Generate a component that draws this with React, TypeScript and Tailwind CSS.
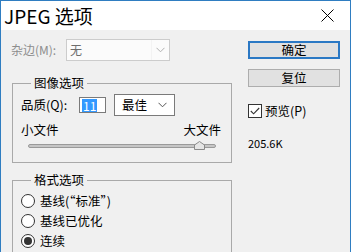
import React from "react";

const font = { fontFamily: '"Noto Sans CJK SC", "Noto Sans", sans-serif' };

function Chevron({ color }: { color: string }) {
  return (
    <svg width="9" height="6" viewBox="0 0 9 6" fill="none">
      <path d="M0.5 0.8 L4.5 4.8 L8.5 0.8" stroke={color} strokeWidth="1" />
    </svg>
  );
}

function Radio({ label, checked }: { label: string; checked?: boolean }) {
  return (
    <div className="flex h-[20px] items-center">
      <div className="ml-[8px] flex h-[14px] w-[14px] items-center justify-center rounded-full border border-[#333] bg-white">
        {checked && <div className="h-[8px] w-[8px] rounded-full bg-[#333]" />}
      </div>
      <span className="ml-[5px] text-[12.5px] leading-[16px] text-black">{label}</span>
    </div>
  );
}

export default function App() {
  return (
    <div
      className="flex h-[252px] w-[351px] flex-col overflow-hidden border-x border-t border-[#2f7dc1] bg-[#f0f0f0]"
      style={font}
    >
      {/* 标题栏 */}
      <div className="flex h-[29px] shrink-0 items-center justify-between bg-white pl-[3px] pr-[16px]">
        <span className="text-[19px] leading-[24px] text-black">JPEG 选项</span>
        <svg width="13" height="13" viewBox="0 0 13 13">
          <path d="M0.5 0.5 L12.5 12.5 M12.5 0.5 L0.5 12.5" stroke="#000" strokeWidth="1" />
        </svg>
      </div>

      <div className="flex">
        {/* 左侧 */}
        <div className="w-[231px] shrink-0 pl-[10px]">
          <div className="mt-[9px] flex h-[22px] items-center">
            <span className="w-[55px] text-[12px] leading-[16px] text-[#8d8d8d]">杂边(M):</span>
            <div className="flex h-[22px] w-[104px] items-center border border-[#cccccc] bg-[#fbfbfb]">
              <span className="ml-[3px] flex-1 text-[12px] leading-[16px] text-[#6d6d6d]">无</span>
              <div className="flex h-full w-[18px] items-center justify-center border-l border-[#f3f3f3]">
                <Chevron color="#b0b0b0" />
              </div>
            </div>
          </div>

          {/* 图像选项 */}
          <fieldset className="ml-[1px] mt-[14px] h-[88px] border border-[#a9a9a9]">
            <legend className="ml-[18px] px-[3px] text-[12.5px] leading-[16px] text-black">图像选项</legend>
            <div className="mt-[3px] flex h-[22px] items-center pl-[8px]">
              <span className="w-[58px] text-[12.5px] leading-[16px] text-black">品质(Q):</span>
              <div className="flex h-[16px] w-[27px] items-center border border-[#7a7a7a] bg-white pl-[2px]">
                <span className="bg-[#3399ff] px-[1px] text-[12px] leading-[13px] text-white">11</span>
              </div>
              <div className="ml-[8px] flex h-[22px] w-[61px] items-center justify-between border border-[#7a7a7a] bg-white pl-[7px] pr-[7px]">
                <span className="text-[12.5px] leading-[16px] text-black">最佳</span>
                <Chevron color="#555" />
              </div>
            </div>
            <div className="mt-[6px] flex justify-between pl-[8px] pr-[10px] text-[12.5px] leading-[16px] text-black">
              <span>小文件</span>
              <span>大文件</span>
            </div>
            <div className="relative ml-[15px] mt-[4px] flex h-[8px] w-[188px] items-center">
              <div className="h-[4px] w-full rounded-full border border-[#9a9a9a] bg-[#c6c6c6]" />
              <svg className="absolute left-[166px] top-[-1px]" width="11" height="9" viewBox="0 0 11 9">
                <path d="M0.5 8.5 L0.5 4 L5.5 0.5 L10.5 4 L10.5 8.5 Z" fill="#e5e5e5" stroke="#8a8a8a" strokeWidth="1" />
              </svg>
            </div>
          </fieldset>

          {/* 格式选项 */}
          <fieldset className="ml-[1px] mt-[9px] h-[120px] border border-[#a9a9a9]">
            <legend className="ml-[18px] px-[3px] text-[12.5px] leading-[16px] text-black">格式选项</legend>
            <div className="mt-[3px] flex flex-col">
              <Radio label="基线(“标准”)" />
              <Radio label="基线已优化" />
              <Radio label="连续" checked />
            </div>
          </fieldset>
        </div>

        {/* 右侧 */}
        <div className="flex flex-col pl-[16px]">
          <button className="mt-[11px] flex h-[18px] w-[92px] items-center justify-center border-2 border-[#2a78c4] bg-[#e1e1e1] text-[12.5px] leading-[16px] text-black">
            确定
          </button>
          <button className="mt-[10px] flex h-[18px] w-[92px] items-center justify-center border border-[#adadad] bg-[#e1e1e1] text-[12.5px] leading-[16px] text-black">
            复位
          </button>
          <div className="mt-[16px] flex items-center">
            <div className="flex h-[14px] w-[14px] items-center justify-center border border-[#333] bg-white">
              <svg width="10" height="8" viewBox="0 0 10 8">
                <path d="M0.8 4 L3.6 6.8 L9.2 1" stroke="#333" strokeWidth="1.1" fill="none" />
              </svg>
            </div>
            <span className="ml-[3px] text-[12.5px] leading-[16px] text-black">预览(P)</span>
          </div>
          <span className="mt-[16px] text-[11px] leading-[16px] text-black">205.6K</span>
        </div>
      </div>
    </div>
  );
}
